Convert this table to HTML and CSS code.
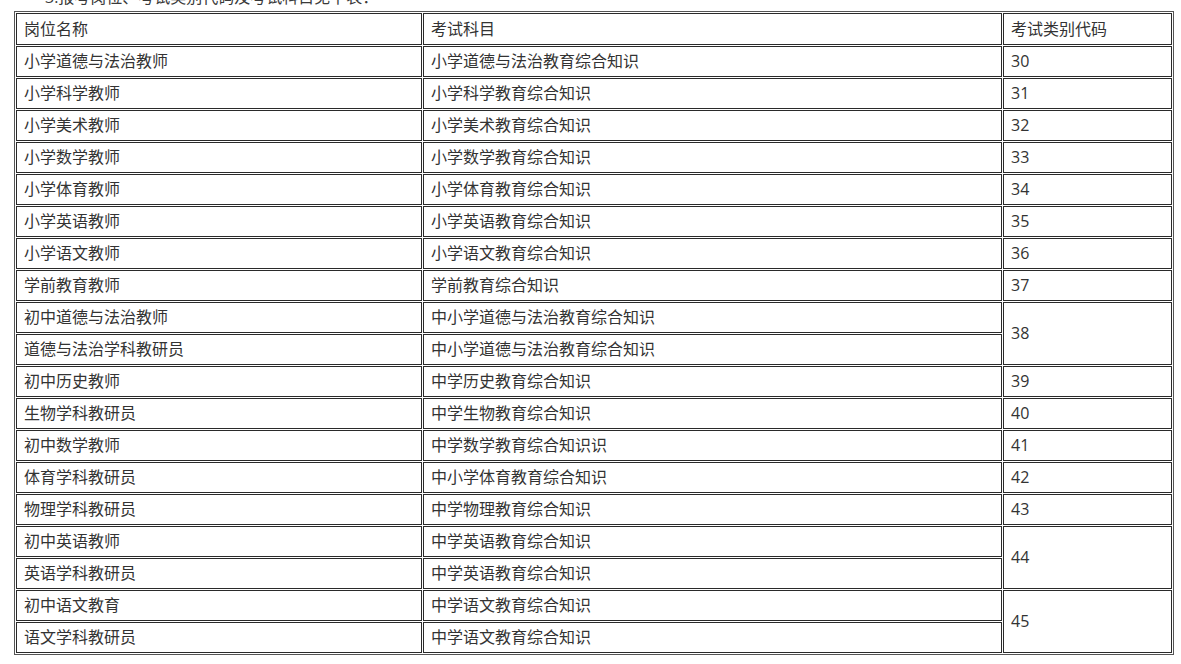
FILE: index.html
```html
<!DOCTYPE html>
<html lang="zh-CN">
<head>
<meta charset="utf-8">
<title>考试类别代码</title>
<link rel="stylesheet" href="styles.css">
</head>
<body>
<div class="page">
  <p class="intro">3.报考岗位、考试类别代码及考试科目见下表：</p>
  <table class="exam">
    <colgroup>
      <col class="c1"><col class="c2"><col class="c3">
    </colgroup>
    <thead>
      <tr class="head"><td>岗位名称</td><td>考试科目</td><td>考试类别代码</td></tr>
    </thead>
    <tbody>
      <tr><td>小学道德与法治教师</td><td>小学道德与法治教育综合知识</td><td>30</td></tr>
      <tr><td>小学科学教师</td><td>小学科学教育综合知识</td><td>31</td></tr>
      <tr><td>小学美术教师</td><td>小学美术教育综合知识</td><td>32</td></tr>
      <tr><td>小学数学教师</td><td>小学数学教育综合知识</td><td>33</td></tr>
      <tr><td>小学体育教师</td><td>小学体育教育综合知识</td><td>34</td></tr>
      <tr><td>小学英语教师</td><td>小学英语教育综合知识</td><td>35</td></tr>
      <tr><td>小学语文教师</td><td>小学语文教育综合知识</td><td>36</td></tr>
      <tr><td>学前教育教师</td><td>学前教育综合知识</td><td>37</td></tr>
      <tr><td>初中道德与法治教师</td><td>中小学道德与法治教育综合知识</td><td rowspan="2">38</td></tr>
      <tr><td>道德与法治学科教研员</td><td>中小学道德与法治教育综合知识</td></tr>
      <tr><td>初中历史教师</td><td>中学历史教育综合知识</td><td>39</td></tr>
      <tr><td>生物学科教研员</td><td>中学生物教育综合知识</td><td>40</td></tr>
      <tr><td>初中数学教师</td><td>中学数学教育综合知识识</td><td>41</td></tr>
      <tr><td>体育学科教研员</td><td>中小学体育教育综合知识</td><td>42</td></tr>
      <tr><td>物理学科教研员</td><td>中学物理教育综合知识</td><td>43</td></tr>
      <tr><td>初中英语教师</td><td>中学英语教育综合知识</td><td rowspan="2">44</td></tr>
      <tr><td>英语学科教研员</td><td>中学英语教育综合知识</td></tr>
      <tr><td>初中语文教育</td><td>中学语文教育综合知识</td><td rowspan="2">45</td></tr>
      <tr><td>语文学科教研员</td><td>中学语文教育综合知识</td></tr>
    </tbody>
  </table>
</div>
</body>
</html>
```

FILE: styles.css
```css
html, body {
  margin: 0;
  padding: 0;
  background: #ffffff;
}

body {
  font-family: "Open Sans", "Noto Sans CJK SC", sans-serif;
  color: #333333;
  font-size: 16px;
}

.page {
  padding-left: 14px;
  overflow: hidden;
}

.intro {
  margin: -13px 0 0 0;
  line-height: 20px;
  text-indent: 31px;
  color: #3a3a3a;
  white-space: nowrap;
}

.exam {
  margin-top: 4px;
  border-collapse: separate;
  border-spacing: 1px;
  border: 1px solid #555555;
  table-layout: fixed;
  width: 1158px;
}

.c1 { width: 406px; }
.c2 { width: 579px; }
.c3 { width: 169px; }

.exam td {
  border: 1px solid #2a2a2a;
  padding: 0 7px;
  height: 29px;
  line-height: 29px;
  vertical-align: middle;
  white-space: nowrap;
  overflow: hidden;
  box-sizing: content-box;
}

.exam .head td {
  height: 30px;
  line-height: 30px;
}
```
